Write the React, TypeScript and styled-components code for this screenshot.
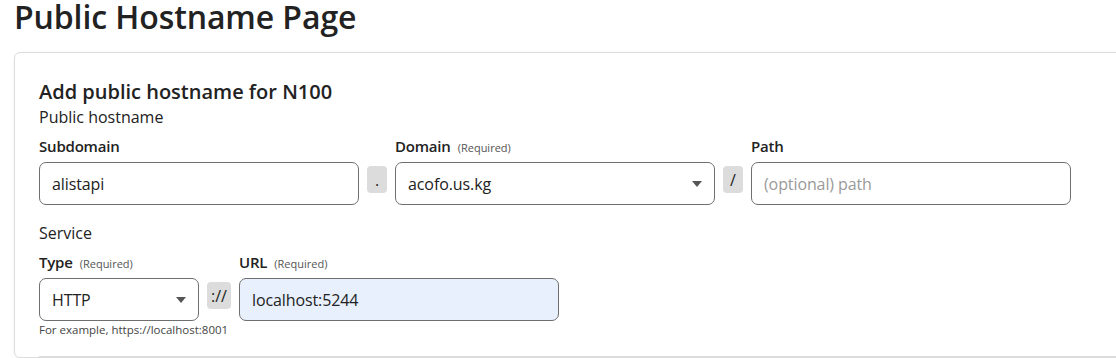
import React from 'react'
import styled, { createGlobalStyle } from 'styled-components'

const GlobalStyle = createGlobalStyle`
  body {
    margin: 0;
    background: #fff;
    font-family: "Open Sans", "Noto Sans", sans-serif;
    color: #212529;
    overflow: hidden;
  }
`

const Page = styled.div`
  padding: 0 0 0 14px;
  width: 1140px;
`

const Title = styled.h1`
  margin: 0;
  font-size: 32px;
  font-weight: 600;
  line-height: 34px;
  letter-spacing: -0.1px;
  color: #222;
  height: 52px;
`

const Card = styled.section`
  border: 1px solid #dcdcdc;
  border-radius: 6px;
  box-shadow: 0 1px 3px rgba(0, 0, 0, 0.06);
  padding: 25px 24px 0 24px;
`

const CardTitle = styled.h2`
  margin: 0;
  font-size: 20px;
  font-weight: 600;
  line-height: 28px;
  color: #222;
`

const Section = styled.div`
  font-size: 16px;
  line-height: 22px;
  color: #222;
`

const Service = styled(Section)`
  margin-top: 17px;
`

const Row = styled.div`
  display: flex;
  gap: 8px;
  align-items: flex-end;
`

const Field = styled.div<{ $width: number }>`
  display: flex;
  flex-direction: column;
  width: ${({ $width }) => $width}px;
`

const Label = styled.div`
  font-size: 15px;
  font-weight: 600;
  line-height: 20px;
  height: 20px;
  letter-spacing: -0.2px;
  color: #222;
  padding: 8px 0 6px;
`

const Req = styled.span`
  font-size: 11px;
  font-weight: 400;
  line-height: 1;
  color: #555;
  margin-left: 7px;
  letter-spacing: 0;
`

const Input = styled.div<{ $filled?: boolean; $placeholder?: boolean }>`
  box-sizing: border-box;
  height: 43px;
  border: 1px solid #6f6f6f;
  border-radius: 7px;
  background: ${({ $filled }) => ($filled ? '#e8f0fe' : '#fff')};
  padding: 0 12px;
  display: flex;
  align-items: center;
  justify-content: space-between;
  font-size: 16px;
  letter-spacing: -0.1px;
  color: ${({ $placeholder }) => ($placeholder ? '#9a9a9a' : '#222')};
`

const Caret = styled.span`
  width: 0;
  height: 0;
  border-left: 5px solid transparent;
  border-right: 5px solid transparent;
  border-top: 6px solid #555;
`

const Sep = styled.div<{ $width: number }>`
  box-sizing: border-box;
  width: ${({ $width }) => $width}px;
  height: 27px;
  margin-bottom: 12px;
  background: #dcdcdc;
  border-radius: 4px;
  display: flex;
  align-items: center;
  justify-content: center;
  font-size: 16px;
  color: #222;
`

const Help = styled.div`
  font-size: 11.5px;
  line-height: 16px;
  color: #444;
  margin-top: 1px;
`

const Divider = styled.hr`
  border: 0;
  border-top: 1px solid #dcdcdc;
  margin: 18px 0 0;
`

const App = () => {
  return (
    <Page>
      <GlobalStyle />
      <Title>Public Hostname Page</Title>
      <Card>
        <CardTitle>Add public hostname for N100</CardTitle>
        <Section>Public hostname</Section>
        <Row>
          <Field $width={320}>
            <Label>Subdomain</Label>
            <Input>alistapi</Input>
          </Field>
          <Sep $width={20}>.</Sep>
          <Field $width={320}>
            <Label>
              Domain<Req>(Required)</Req>
            </Label>
            <Input>
              acofo.us.kg
              <Caret />
            </Input>
          </Field>
          <Sep $width={20}>/</Sep>
          <Field $width={320}>
            <Label>Path</Label>
            <Input $placeholder>(optional) path</Input>
          </Field>
        </Row>
        <Service>Service</Service>
        <Row>
          <Field $width={160}>
            <Label>
              Type<Req>(Required)</Req>
            </Label>
            <Input>
              HTTP
              <Caret />
            </Input>
          </Field>
          <Sep $width={24}>://</Sep>
          <Field $width={320}>
            <Label>
              URL<Req>(Required)</Req>
            </Label>
            <Input $filled>localhost:5244</Input>
          </Field>
        </Row>
        <Help>For example, https://localhost:8001</Help>
        <Divider />
      </Card>
    </Page>
  )
}

export default App
